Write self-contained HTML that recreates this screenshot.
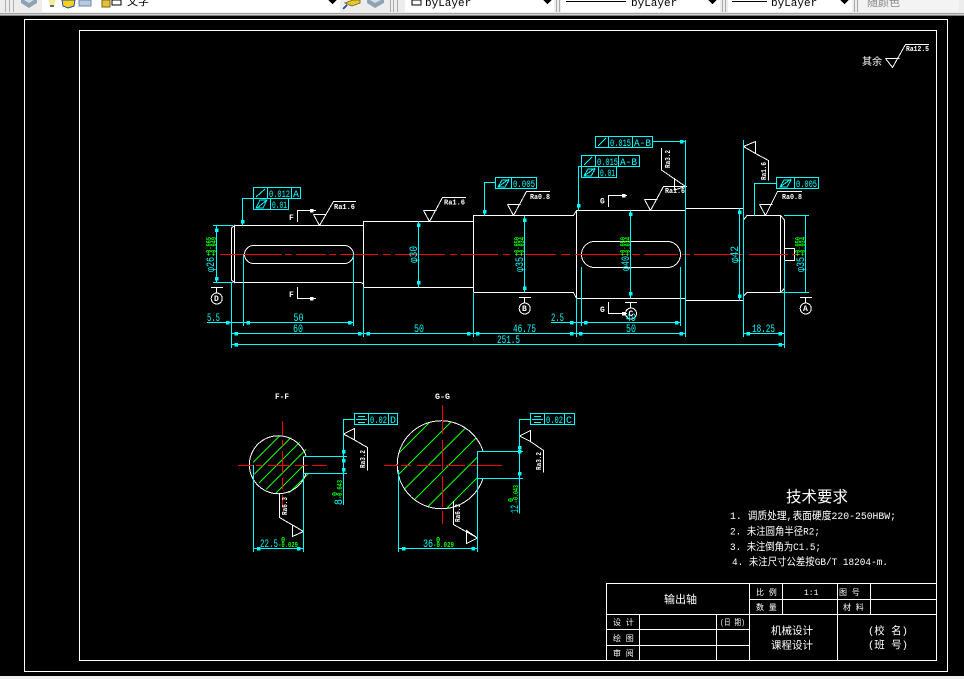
<!DOCTYPE html>
<html><head><meta charset="utf-8"><style>
html,body{margin:0;padding:0;background:#000;width:964px;height:679px;overflow:hidden}
svg{position:absolute;left:0;top:0}
text{font-family:"Liberation Mono","Noto Sans CJK SC",monospace}
.w{stroke:#fff;fill:none;stroke-width:1}
.c{stroke:#0ff;fill:none;stroke-width:1}
.g{stroke:#0f0;fill:none;stroke-width:1}
.r{stroke:#f00;fill:none;stroke-width:1.4}
.tc{fill:#0ff;font-size:11px}
.ts{fill:#fff;font-size:7px;font-weight:bold}
.tg{fill:#0f0;font-size:7px;font-weight:bold}
.cn{fill:#fff;font-family:"Noto Sans CJK SC","WenQuanYi Zen Hei",sans-serif}
.tf{fill:#fff;font-size:8px;font-weight:bold}
</style></head><body>
<svg width="964" height="679" viewBox="0 0 964 679" shape-rendering="crispEdges">
<defs><rect id="s" x="-1.5" y="-1.5" width="3.5" height="3.5" fill="#0ff"/></defs>
<!-- toolbar -->
<rect x="0" y="0" width="964" height="13" fill="#ededed"/>
<rect x="0" y="13" width="964" height="1" fill="#a0a0a0"/>
<rect x="0" y="14" width="964" height="1" fill="#d0d0d0"/>
<rect x="0" y="15" width="964" height="1" fill="#808080"/>
<rect x="5" y="0" width="1" height="12" fill="#b0b0b0"/><rect x="9" y="0" width="1" height="12" fill="#b0b0b0"/><rect x="13" y="0" width="1" height="12" fill="#b0b0b0"/>
<rect x="42" y="0" width="298" height="12" fill="#fff"/>
<rect x="405" y="0" width="149" height="12" fill="#fff"/>
<rect x="561" y="0" width="159" height="12" fill="#fff"/>
<rect x="728" y="0" width="124" height="12" fill="#fff"/>
<rect x="859" y="0" width="100" height="12" fill="#f3f3f3"/>
<rect x="390" y="0" width="1" height="12" fill="#aaa"/><rect x="393" y="0" width="1" height="12" fill="#aaa"/><rect x="397" y="0" width="1" height="12" fill="#aaa"/>
<rect x="556" y="0" width="1" height="12" fill="#aaa"/><rect x="559" y="0" width="1" height="12" fill="#aaa"/>
<rect x="722" y="0" width="1" height="12" fill="#aaa"/><rect x="725" y="0" width="1" height="12" fill="#aaa"/>
<rect x="854" y="0" width="1" height="12" fill="#aaa"/><rect x="857" y="0" width="1" height="12" fill="#aaa"/>
<polygon points="21,0 37,0 37,3 29,8 21,3" fill="#8fa3b5"/>
<polygon points="24,0 34,0 29,3" fill="#d5dde5"/>
<polygon points="48,0 56,0 54,5 50,5" fill="#f4e9a0"/><rect x="50" y="5" width="4" height="2" fill="#667"/>
<path d="M62 0 L63 6 L68 8 L74 6 L75 0 Z" fill="#f5d21f" stroke="#1f4fa8"/>
<rect x="79" y="0" width="12" height="6" fill="#b9c9de" stroke="#6a86b0"/>
<rect x="102" y="0" width="8" height="7" fill="#e0c53a" stroke="#806010"/>
<rect x="112" y="0" width="9" height="5" fill="#fff" stroke="#000"/>
<polygon points="328,0 337,0 332.5,4" fill="#000"/>
<polygon points="345,3 353,0 360,0 360,3 352,6" fill="#e6c832" stroke="#8a7510"/>
<path d="M343 9 L347 5" stroke="#1f4fa8" stroke-width="2"/>
<polygon points="367,0 384,0 384,3 375,8 367,3" fill="#8fa3b5"/>
<polygon points="370,0 381,0 375,3" fill="#d5dde5"/>
<rect x="412" y="0" width="9" height="5" fill="#fff" stroke="#000"/>
<polygon points="543,0 552,0 547.5,4" fill="#000"/>
<polygon points="708,0 717,0 712.5,4" fill="#000"/>
<polygon points="840,0 849,0 844.5,4" fill="#000"/>
<rect x="566" y="1" width="60" height="1" fill="#000"/>
<rect x="732" y="1" width="35" height="1" fill="#000"/>
<g style="font-size:11px" fill="#000">
<text x="425" y="6">byLayer</text><text x="631" y="6">byLayer</text><text x="771" y="6">byLayer</text>
<text x="127" y="5" style="font-size:11px;font-family:'Noto Sans CJK SC',sans-serif">文字</text>
<text x="867" y="6" fill="#888" style="font-size:11px;font-family:'Noto Sans CJK SC',sans-serif">随颜色</text>
</g>
<rect x="0" y="676" width="964" height="3" fill="#efefef"/>

<!-- frames -->
<rect class="w" x="24.5" y="19.5" width="923" height="652"/>
<rect class="w" x="79.5" y="30.5" width="857" height="630"/>

<!-- hatch -->
<clipPath id="c1"><circle cx="281.7" cy="465" r="29"/></clipPath>
<clipPath id="c2"><circle cx="441.7" cy="465" r="44"/></clipPath>
<g clip-path="url(#c1)"><g class="g"><path d="M253 462.5L296 419.5M253 475.5L310 418.5M253 489L310 432M253 502.5L310 445.5M260 509L310 459M273 509L310 472"/></g></g>
<g clip-path="url(#c2)"><g class="g"><path d="M398 454L431 421M398 475L452 421M398 495.5L472.5 421M398 516L477 437M410 524.5L477 457.5M430 525L490 465"/></g></g>
<rect x="304" y="457" width="10" height="16" fill="#000"/>
<rect x="478" y="452" width="12" height="26" fill="#000"/>

<!-- shaft -->
<g class="w">
<path d="M234.5 225.5H363.5V221.5H473.5V215.5H573.5L576.5 210.5H685.5V208.5H743.5V300.5H685.5V298.5H576.5L573.5 292.5H473.5V287.5H363.5V284L361 282.5H234.5"/>
<path d="M234.5 225.5L231.5 228V280L234.5 282.5V225.5Z"/>
<path d="M363.5 221.5V287.5M473.5 215.5V292.5M576.5 210.5V298.5M685.5 208.5V298.5"/>
<path d="M743.5 208.5V215.5M743.5 220L747 215.5H780.5L784.5 220V288L781 292.5H747L743.5 296"/>
<path d="M780.5 215.5V292.5"/>
<path d="M784.5 248.5H794.5V260.5H784.5"/>
<rect x="244.5" y="245.5" width="109" height="18" rx="9" ry="9"/>
<rect x="581.5" y="241.5" width="99" height="26" rx="13" ry="13"/>
<!-- section brackets -->
<path d="M297.5 222V210.5H316M297.5 287V298.5H316"/>
<path d="M608.5 207V195.5H627M608.5 302V313.5H627"/>
<!-- roughness -->
<path d="M313.5 214.5H326.5M313.5 214.5L319.5 225.5L333.5 201.5H356"/>
<path d="M423.5 210.5H436.5M423.5 210.5L429.5 221.5L442.5 197.5H466"/>
<path d="M507.5 204.5H520.5M507.5 204.5L513.5 215.5L526.5 191.5H550"/>
<path d="M644.5 199.5H657.5M644.5 199.5L650.5 210.5L663.5 186.5H687"/>
<path d="M759.5 204.5H772.5M759.5 204.5L765.5 215.5L777.5 191.5H802"/>
<path d="M661.5 148V170L685.5 186.5L674.5 190V178"/>
<path d="M743.5 146.5L755.5 141.5V153.5L743.5 146.5M755.5 153.5L768.5 160.5V180.5"/>
<path d="M885.5 58.5H899.5M885.5 58.5L892.5 67.5L905.5 44.5H929"/>
<!-- datums -->
<path d="M211 287.5H223M216.5 287.5V293"/><circle cx="216.7" cy="298.5" r="5.5"/>
<path d="M519 297.5H531M524.5 297.5V303"/><circle cx="524.7" cy="308.5" r="5.5"/>
<path d="M625 302.5H637M630.5 302.5V308"/><circle cx="631" cy="313.5" r="5.5"/>
<path d="M800 297.5H812M805.5 297.5V303"/><circle cx="805.7" cy="308.5" r="5.5"/>
<!-- sections -->
<path d="M303.5 456.5H310M303.5 456.5V473.5" />
<path d="M477.5 451.5H484M477.5 451.5V478.5" />
<path d="M306 456A29 29 0 1 0 306 473.5"/>
<path d="M483 451A44 44 0 1 0 483 478.5"/>
<path d="M343.5 434L354.5 428.5V440Z M354.5 440L367.5 447.5V470.5"/>
<path d="M279.5 494V517.5L303.5 531.5L292.5 536.5V525L303.5 531.5"/>
<path d="M519.5 436L530.5 430.5V441.5Z M530.5 441.5L543.5 450.5V472.5"/>
<path d="M453.5 501V524.5L477.5 538L466.5 543.5V530.5L477.5 538"/>
<!-- title block -->
<rect x="606.5" y="583.5" width="330" height="77"/>
<path d="M606.5 614.5H936.5M749.5 599.5H936.5M606.5 629.5H749.5M606.5 645.5H749.5M749.5 583.5V660.5M782.5 583.5V614.5M837.5 583.5V660.5M870.5 583.5V614.5M639.5 614.5V660.5M716.5 614.5V660.5"/>
</g>

<!-- center lines -->
<g class="r">
<path d="M220 254.5H243M244 254.5H282M285 254.5H292M296 254.5H326M329 254.5H336M340 254.5H378M383 254.5H391M395 254.5H445M450 254.5H457M461 254.5H498M503 254.5H510M515 254.5H556M561 254.5H570M575 254.5H628M632 254.5H640M644 254.5H678M682 254.5H690M694 254.5H732M737 254.5H744M749 254.5H788M792 254.5H800" stroke-width="1"/>
<path d="M238 465.5H253M256 465.5H263M268 465.5H290M295 465.5H308M312 465.5H327"/>
<path d="M282.5 421V435M282.5 440V446M282.5 451V473M282.5 478V489M282.5 495V508"/>
<path d="M384 465.5H398M401 465.5H411M417 465.5H441M446 465.5H465M470 465.5H502"/>
<path d="M442.5 405V434M442.5 440V470M442.5 476V507M442.5 511V524"/>
</g>

<!-- dims -->
<g class="c">
<path d="M213 225.5H233M213 282.5H233M216.5 225.5V282.5"/>
<path d="M231.5 282V348M243.5 254V326M353.5 254V326M207 322.5H353.5"/>
<path d="M231.5 333.5H363.5M363.5 287V337M473.5 292V337M363.5 333.5H473.5M473.5 333.5H576.5"/>
<path d="M231.5 344.5H784.5M784.5 260V348"/>
<path d="M576.5 298V337M685.5 140V337M743.5 140V337M576.5 333.5H685.5M743.5 333.5H784.5"/>
<path d="M581.5 267V326M680.5 267V326M551 322.5H680.5"/>
<path d="M418.5 221.5V287.5M524.5 215.5V292.5M630.5 210.5V298.5M739.5 208.5V300.5M805.5 215.5V292.5M784 215.5H809M781 292.5H809"/>
<!-- FCF -->
<rect x="253.5" y="187.5" width="47" height="11"/><path d="M267.5 187.5V198.5M291.5 187.5V198.5"/>
<rect x="253.5" y="198.5" width="35" height="11"/><path d="M270.5 198.5V209.5"/>
<path d="M253.5 198.5H242.5V225.5"/>
<path d="M256 197L265 189M257 208L267 200M260 200H267L263 208H256Z"/>
<rect x="595.5" y="136.5" width="57" height="11"/><path d="M608.5 136.5V147.5M632.5 136.5V147.5M652.5 141.5H685.5M598 146L606 138"/>
<rect x="581.5" y="155.5" width="58" height="11"/><path d="M595.5 155.5V166.5M618.5 155.5V166.5M584 165L592 157"/>
<rect x="581.5" y="166.5" width="35" height="11"/><path d="M598.5 166.5V177.5M581.5 166.5H578.5V210.5M584 176L595 168M588 169H595L591 176H584Z"/>
<rect x="495.5" y="177.5" width="41" height="11"/><path d="M511.5 177.5V188.5M495.5 182.5H484.5V215.5M498 187L509 179M502 180H509L505 187H498Z"/>
<rect x="776.5" y="177.5" width="42" height="11"/><path d="M794.5 177.5V188.5M776.5 183.5H754.5V215.5M780 187L791 179M784 180H791L787 187H780Z"/>
<!-- section dims -->
<rect x="354.5" y="413.5" width="43" height="11"/><path d="M368.5 413.5V424.5M388.5 413.5V424.5M354.5 419.5H343.5V505M358 416.5H365M356 419.5H367M358 422.5H365"/>
<path d="M303.5 456.5H347M303.5 473.5H347V473.5M303.5 473V552M253.5 465V552M253.5 548.5H303.5"/>
<rect x="530.5" y="413.5" width="44" height="11"/><path d="M544.5 413.5V424.5M564.5 413.5V424.5M530.5 419.5H519.5V513.5M534 416.5H541M532 419.5H543M534 422.5H541"/>
<path d="M477.5 451.5H523M477.5 478.5H523M477.5 451V552M398.5 470V552M398.5 548.5H477.5"/>
</g>
<g>
<use href="#s" x="216.5" y="230"/><use href="#s" x="216.5" y="278.5"/>
<use href="#s" x="227.5" y="322.5"/><use href="#s" x="248" y="322.5"/><use href="#s" x="349.5" y="322.5"/>
<use href="#s" x="236" y="333.5"/><use href="#s" x="359.5" y="333.5"/><use href="#s" x="368" y="333.5"/><use href="#s" x="468.5" y="333.5"/>
<use href="#s" x="477.5" y="333.5"/><use href="#s" x="571.5" y="333.5"/><use href="#s" x="580.5" y="333.5"/><use href="#s" x="681" y="333.5"/>
<use href="#s" x="748" y="333.5"/><use href="#s" x="780" y="333.5"/>
<use href="#s" x="236" y="344.5"/><use href="#s" x="780" y="344.5"/>
<use href="#s" x="571.5" y="322.5"/><use href="#s" x="585.5" y="322.5"/><use href="#s" x="676.5" y="322.5"/>
<use href="#s" x="418.5" y="225"/><use href="#s" x="418.5" y="282.5"/>
<use href="#s" x="524.5" y="220"/><use href="#s" x="524.5" y="288"/>
<use href="#s" x="630.5" y="214"/><use href="#s" x="630.5" y="293.5"/>
<use href="#s" x="739.5" y="212"/><use href="#s" x="739.5" y="296"/>
<use href="#s" x="242.5" y="221.5"/><use href="#s" x="681.5" y="141.5"/><use href="#s" x="578.5" y="205.5"/><use href="#s" x="484.5" y="211.5"/>
<use href="#s" x="343.5" y="451.5"/><use href="#s" x="343.5" y="460.5"/><use href="#s" x="343.5" y="469.5"/>
<use href="#s" x="519.5" y="447.5"/><use href="#s" x="519.5" y="451.5"/><use href="#s" x="519.5" y="473.5"/>
<use href="#s" x="258.5" y="548.5"/><use href="#s" x="298.5" y="548.5"/><use href="#s" x="403.5" y="548.5"/><use href="#s" x="473" y="548.5"/>
<rect x="622" y="194" width="3.5" height="3.5" fill="#fff"/><rect x="622" y="312" width="3.5" height="3.5" fill="#fff"/>
<rect x="310" y="209" width="3.5" height="3.5" fill="#fff"/><rect x="310" y="297" width="3.5" height="3.5" fill="#fff"/>
</g>

<g shape-rendering="auto">
<!-- dim text -->
<g class="tc">
<text x="207" y="321" textLength="13" lengthAdjust="spacingAndGlyphs">5.5</text>
<text x="293.5" y="321" textLength="10" lengthAdjust="spacingAndGlyphs">50</text>
<text x="293" y="332" textLength="10" lengthAdjust="spacingAndGlyphs">60</text>
<text x="414" y="332" textLength="10" lengthAdjust="spacingAndGlyphs">50</text>
<text x="513" y="332" textLength="23" lengthAdjust="spacingAndGlyphs">46.75</text>
<text x="551" y="321" textLength="13" lengthAdjust="spacingAndGlyphs">2.5</text>
<text x="626" y="321" textLength="10" lengthAdjust="spacingAndGlyphs">49</text>
<text x="626" y="332" textLength="10" lengthAdjust="spacingAndGlyphs">50</text>
<text x="752" y="332" textLength="23" lengthAdjust="spacingAndGlyphs">18.25</text>
<text x="497" y="343" textLength="23" lengthAdjust="spacingAndGlyphs">251.5</text>
<text transform="rotate(-90 214 272)" x="214" y="272" textLength="15" lengthAdjust="spacingAndGlyphs">φ26</text>
<text transform="rotate(-90 417 263)" x="417" y="263" textLength="17" lengthAdjust="spacingAndGlyphs">φ30</text>
<text transform="rotate(-90 523 272)" x="523" y="272" textLength="15" lengthAdjust="spacingAndGlyphs">φ35</text>
<text transform="rotate(-90 629 271)" x="629" y="271" textLength="15" lengthAdjust="spacingAndGlyphs">φ40</text>
<text transform="rotate(-90 738 263)" x="738" y="263" textLength="17" lengthAdjust="spacingAndGlyphs">φ42</text>
<text transform="rotate(-90 804 272)" x="804" y="272" textLength="15" lengthAdjust="spacingAndGlyphs">φ35</text>
<text transform="rotate(-90 342 505)" x="342" y="505" textLength="6" lengthAdjust="spacingAndGlyphs">8</text>
<text transform="rotate(-90 518 513)" x="518" y="513" textLength="8" lengthAdjust="spacingAndGlyphs">12</text>
<text x="260" y="547" textLength="18" lengthAdjust="spacingAndGlyphs">22.5</text>
<text x="423" y="547" textLength="10" lengthAdjust="spacingAndGlyphs">36</text>
</g>
<g class="tc" style="font-size:10px">
<text x="269" y="197" textLength="21" lengthAdjust="spacingAndGlyphs">0.012</text><text x="293" y="197" textLength="6" lengthAdjust="spacingAndGlyphs">A</text>
<text x="272" y="208" textLength="15" lengthAdjust="spacingAndGlyphs">0.01</text>
<text x="610" y="146" textLength="21" lengthAdjust="spacingAndGlyphs">0.015</text><text x="634" y="146" textLength="17" lengthAdjust="spacingAndGlyphs">A-B</text>
<text x="597" y="165" textLength="21" lengthAdjust="spacingAndGlyphs">0.015</text><text x="620" y="165" textLength="17" lengthAdjust="spacingAndGlyphs">A-B</text>
<text x="600" y="176" textLength="15" lengthAdjust="spacingAndGlyphs">0.01</text>
<text x="513" y="187" textLength="22" lengthAdjust="spacingAndGlyphs">0.005</text><text x="796" y="187" textLength="21" lengthAdjust="spacingAndGlyphs">0.005</text>
<text x="370" y="423" textLength="17" lengthAdjust="spacingAndGlyphs">0.02</text><text x="390" y="423" textLength="6" lengthAdjust="spacingAndGlyphs">D</text>
<text x="546" y="423" textLength="17" lengthAdjust="spacingAndGlyphs">0.02</text><text x="566" y="423" textLength="6" lengthAdjust="spacingAndGlyphs">C</text>
</g>
<!-- tolerance -->
<g class="tg">
<text transform="rotate(-90 211 256)" x="211" y="256" textLength="19" lengthAdjust="spacingAndGlyphs">+0.065</text><text transform="rotate(-90 216 256)" x="216" y="256" textLength="19" lengthAdjust="spacingAndGlyphs">+0.049</text>
<text transform="rotate(-90 519 256)" x="519" y="256" textLength="19" lengthAdjust="spacingAndGlyphs">+0.050</text><text transform="rotate(-90 524 256)" x="524" y="256" textLength="19" lengthAdjust="spacingAndGlyphs">+0.034</text>
<text transform="rotate(-90 625 256)" x="625" y="256" textLength="19" lengthAdjust="spacingAndGlyphs">+0.050</text><text transform="rotate(-90 630 256)" x="630" y="256" textLength="19" lengthAdjust="spacingAndGlyphs">+0.034</text>
<text transform="rotate(-90 800 256)" x="800" y="256" textLength="19" lengthAdjust="spacingAndGlyphs">+0.050</text><text transform="rotate(-90 805 256)" x="805" y="256" textLength="19" lengthAdjust="spacingAndGlyphs">+0.034</text>
<text transform="rotate(-90 337 496)" x="337" y="496" textLength="4" lengthAdjust="spacingAndGlyphs">0</text><text transform="rotate(-90 342 499)" x="342" y="499" textLength="19" lengthAdjust="spacingAndGlyphs">-0.043</text>
<text transform="rotate(-90 513 502)" x="513" y="502" textLength="4" lengthAdjust="spacingAndGlyphs">0</text><text transform="rotate(-90 518 503)" x="518" y="503" textLength="18" lengthAdjust="spacingAndGlyphs">-0.043</text>
<text x="278" y="547" textLength="20" lengthAdjust="spacingAndGlyphs">-0.029</text><text x="281" y="542">0</text>
<text x="433" y="547" textLength="21" lengthAdjust="spacingAndGlyphs">-0.029</text><text x="436" y="542">0</text>
</g>
<!-- roughness text -->
<g class="ts">
<text x="334" y="209" textLength="21" lengthAdjust="spacingAndGlyphs">Ra1.6</text><text x="444" y="204.5" textLength="21" lengthAdjust="spacingAndGlyphs">Ra1.6</text>
<text x="530" y="199" textLength="20" lengthAdjust="spacingAndGlyphs">Ra0.8</text><text x="665" y="193" textLength="20" lengthAdjust="spacingAndGlyphs">Ra1.6</text><text x="782" y="199" textLength="20" lengthAdjust="spacingAndGlyphs">Ra0.8</text>
<text x="906" y="51" textLength="23" lengthAdjust="spacingAndGlyphs">Ra12.5</text>
<text transform="rotate(-90 670 168)" x="670" y="168" textLength="18" lengthAdjust="spacingAndGlyphs">Ra3.2</text>
<text transform="rotate(-90 766 180)" x="766" y="180" textLength="18" lengthAdjust="spacingAndGlyphs">Ra1.6</text>
<text transform="rotate(-90 365 468)" x="365" y="468" textLength="18" lengthAdjust="spacingAndGlyphs">Ra3.2</text>
<text transform="rotate(-90 287 515)" x="287" y="515" textLength="18" lengthAdjust="spacingAndGlyphs">Ra6.3</text>
<text transform="rotate(-90 541 470)" x="541" y="470" textLength="18" lengthAdjust="spacingAndGlyphs">Ra3.2</text>
<text transform="rotate(-90 460 522)" x="460" y="522" textLength="18" lengthAdjust="spacingAndGlyphs">Ra6.3</text>
</g>
<!-- labels -->
<g class="tf">
<text x="289" y="220">F</text><text x="289" y="297">F</text><text x="600" y="203.5">G</text><text x="600" y="312">G</text>
<text x="275" y="399" textLength="14" lengthAdjust="spacingAndGlyphs">F-F</text><text x="435" y="399" textLength="15" lengthAdjust="spacingAndGlyphs">G-G</text>
<text x="214" y="301">D</text><text x="522" y="311">B</text><text x="628.5" y="316">C</text><text x="803" y="311">A</text>
</g>
<!-- CJK -->
<g class="cn">
<text x="862" y="65" style="font-size:10px">其余</text>
<text x="786" y="502" style="font-size:15.5px">技术要求</text>
<g style="font-size:10.5px">
<text x="730" y="519" textLength="166" lengthAdjust="spacingAndGlyphs">1. 调质处理,表面硬度220-250HBW;</text>
<text x="730" y="534.5" textLength="90" lengthAdjust="spacingAndGlyphs">2. 未注圆角半径R2;</text>
<text x="730" y="550" textLength="91" lengthAdjust="spacingAndGlyphs">3. 未注倒角为C1.5;</text>
<text x="732" y="565" textLength="156" lengthAdjust="spacingAndGlyphs">4. 未注尺寸公差按GB/T 18204-m.</text>
</g>
<text x="664" y="603" style="font-size:11px">输出轴</text>
<g style="font-size:8px">
<text x="756" y="595">比 例</text><text x="756" y="610">数 量</text><text x="839" y="595">图 号</text><text x="843" y="610">材 料</text>
<text x="613" y="625">设 计</text><text x="613" y="641">绘 图</text><text x="613" y="656">审 阅</text><text x="720" y="625" textLength="25" lengthAdjust="spacingAndGlyphs">(日 期)</text>
<text x="804" y="595">1:1</text>
</g>
<g style="font-size:10.5px">
<text x="771" y="634">机械设计</text><text x="771" y="648.5">课程设计</text>
<text x="868" y="634">(校 名)</text><text x="868" y="648">(班 号)</text>
</g>
</g>
</g>
</svg>
</body></html>
